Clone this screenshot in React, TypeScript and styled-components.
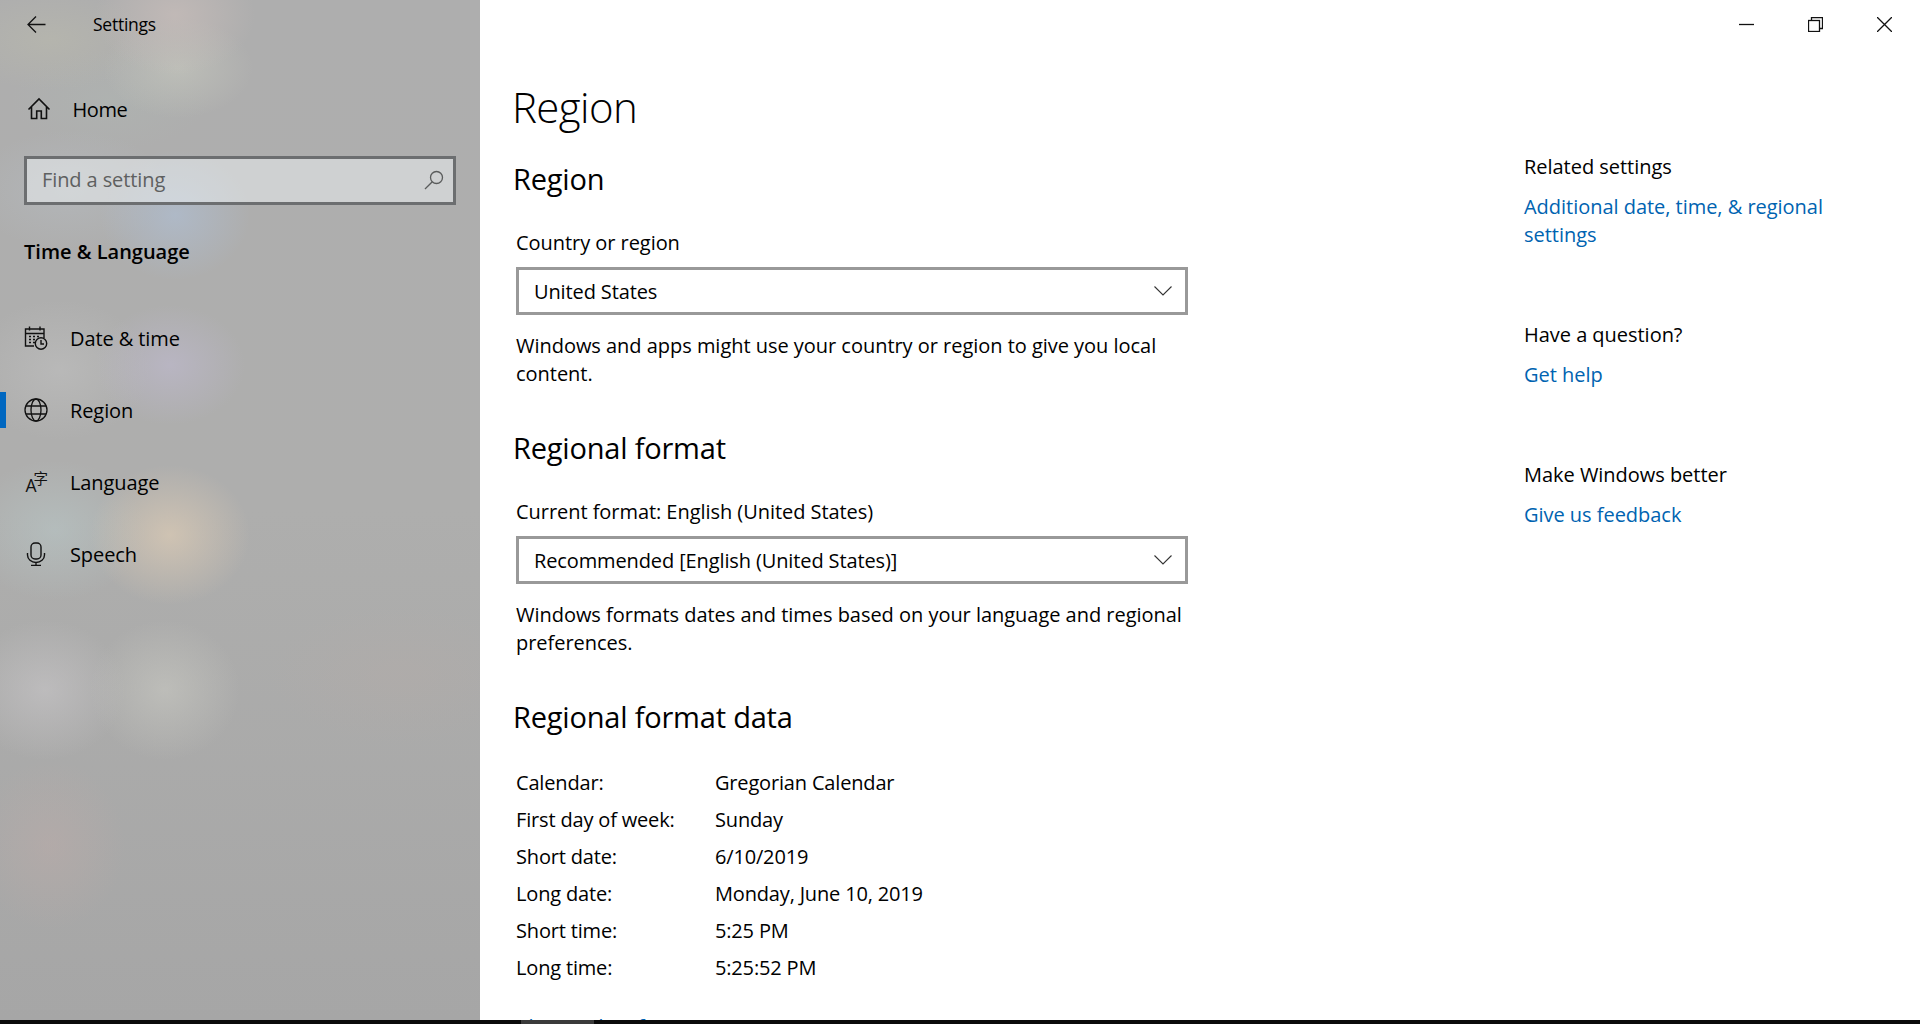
import { Fragment } from "react";
import styled, { createGlobalStyle } from "styled-components";

const GlobalStyle = createGlobalStyle`
  html, body {
    margin: 0;
    padding: 0;
    background: #0a0a0a;
  }
  * {
    box-sizing: border-box;
  }
`;

const sideBlur = `
  radial-gradient(ellipse 80px 60px at 175px 15px, rgba(205, 192, 188, 0.6), transparent),
  radial-gradient(ellipse 75px 50px at 178px 68px, rgba(198, 200, 190, 0.6), transparent),
  radial-gradient(ellipse 100px 50px at 50px 40px, rgba(190, 190, 172, 0.4), transparent),
  radial-gradient(ellipse 100px 50px at 110px 100px, rgba(175, 185, 180, 0.35), transparent),
  radial-gradient(ellipse 75px 65px at 175px 215px, rgba(175, 192, 215, 0.6), transparent),
  radial-gradient(ellipse 100px 60px at 70px 190px, rgba(190, 200, 210, 0.3), transparent),
  radial-gradient(ellipse 75px 60px at 170px 365px, rgba(190, 185, 205, 0.65), transparent),
  radial-gradient(ellipse 90px 70px at 60px 370px, rgba(200, 200, 200, 0.4), transparent),
  radial-gradient(ellipse 80px 70px at 170px 535px, rgba(215, 200, 180, 0.8), transparent),
  radial-gradient(ellipse 90px 70px at 55px 530px, rgba(185, 200, 200, 0.55), transparent),
  radial-gradient(ellipse 75px 70px at 165px 690px, rgba(198, 198, 192, 0.65), transparent),
  radial-gradient(ellipse 80px 70px at 45px 690px, rgba(200, 198, 200, 0.6), transparent),
  radial-gradient(ellipse 130px 70px at 400px 675px, rgba(180, 172, 168, 0.4), transparent),
  radial-gradient(ellipse 75px 85px at 50px 845px, rgba(190, 172, 168, 0.45), transparent)
`;

const Screen = styled.div`
  display: flex;
  flex-direction: column;
  width: 1920px;
  height: 1024px;
  overflow: hidden;
`;

const Page = styled.div`
  display: flex;
  height: 1020px;
  flex: none;
  overflow: hidden;
  font-family: "Open Sans", "Noto Sans", sans-serif;
  color: #000;
`;

const TaskStrip = styled.div`
  height: 4px;
  padding-left: 521px;
  background: #0a0a0a;
`;

const TaskTab = styled.div`
  width: 73px;
  height: 4px;
  background: #3a3a3a;
`;

const Sidebar = styled.aside`
  flex: 0 0 480px;
  display: flex;
  flex-direction: column;
  background: ${sideBlur}, linear-gradient(180deg, #aeaeae 0%, #aeaead 50%, #a6a6a6 100%);
`;

const TitleRow = styled.div`
  display: flex;
  align-items: center;
  height: 48px;
  padding-left: 27px;
`;

const AppTitle = styled.span`
  margin-left: 47px;
  font-size: 17.5px;
  letter-spacing: -0.25px;
`;

const HomeRow = styled.div`
  display: flex;
  align-items: center;
  height: 40px;
  margin-top: 41px;
  padding-left: 27px;
  font-size: 20px;
  letter-spacing: -0.4px;
  gap: 21.5px;
`;

const SearchBox = styled.div`
  display: flex;
  align-items: center;
  justify-content: space-between;
  width: 432px;
  height: 49px;
  margin: 27px 0 0 24px;
  padding: 0 9px 2px 15px;
  border: 3px solid #6c6e70;
  background: rgba(235, 238, 240, 0.55);
  color: #5e6060;
  font-size: 20px;
  letter-spacing: -0.1px;
`;

const GroupTitle = styled.div`
  margin: 29px 0 0 24px;
  font-size: 20px;
  line-height: 36px;
  font-weight: 600;
  letter-spacing: 0;
`;

const NavList = styled.nav`
  display: flex;
  flex-direction: column;
  margin-top: 32px;
`;

const NavItem = styled.div<{ $active?: boolean }>`
  display: flex;
  align-items: center;
  height: 72px;
  padding-left: 24px;
  font-size: 20px;
  letter-spacing: -0.1px;
  gap: 22px;
  position: relative;
  &::before {
    content: "";
    display: ${(p) => (p.$active ? "block" : "none")};
    position: absolute;
    left: 0;
    top: 18px;
    width: 6px;
    height: 36px;
    background: #0067c0;
  }
`;

const Main = styled.main`
  flex: 1;
  display: flex;
  flex-direction: column;
  background: #fff;
  overflow: hidden;
`;

const WindowBar = styled.div`
  display: flex;
  justify-content: flex-end;
  height: 48px;
  padding-right: 28px;
  gap: 54px;
  padding-top: 17px;
  flex: none;
`;

const Columns = styled.div`
  display: flex;
  flex: 1;
`;

const Content = styled.div`
  flex: 0 0 1044px;
  padding-left: 36px;
`;

const PageTitle = styled.h1`
  margin: 23px 0 0 -4px;
  font-size: 42px;
  line-height: 72px;
  font-weight: 300;
  letter-spacing: -0.6px;
`;

const SectionTitle = styled.h2<{ $gap: number }>`
  margin: ${(p) => p.$gap}px 0 0 -3px;
  font-size: 29px;
  line-height: 40px;
  font-weight: 400;
  letter-spacing: -0.2px;
`;

const Label = styled.div`
  margin-top: 30px;
  font-size: 20px;
  line-height: 28px;
  letter-spacing: -0.05px;
`;

const Select = styled.div`
  display: flex;
  align-items: center;
  justify-content: space-between;
  width: 672px;
  height: 48px;
  margin-top: 10px;
  padding: 0 13px 0 15px;
  border: 3px solid #999;
  font-size: 20px;
  letter-spacing: -0.12px;
`;

const Help = styled.p`
  width: 672px;
  margin: 17px 0 0;
  font-size: 20px;
  line-height: 28px;
  letter-spacing: -0.03px;
`;

const DataGrid = styled.dl`
  display: grid;
  grid-template-columns: 199px 1fr;
  grid-auto-rows: 37px;
  align-items: center;
  margin: 27px 0 0;
  font-size: 20px;
  letter-spacing: -0.17px;
  dd {
    margin: 0;
  }
`;

const ClippedLink = styled.a`
  display: block;
  margin-top: 27px;
  font-size: 20px;
  line-height: 28px;
  letter-spacing: -0.05px;
  color: #0063b1;
`;

const Aside = styled.div`
  display: flex;
  flex-direction: column;
  padding-top: 105px;
  width: 310px;
  font-size: 20px;
  line-height: 28px;
  letter-spacing: -0.03px;
`;

const AsideBlock = styled.section`
  margin-bottom: 72px;
`;

const AsideTitle = styled.div`
  margin-bottom: 12px;
`;

const AsideLink = styled.a`
  display: block;
  color: #0063b1;
`;

const Icon = styled.svg<{ $size?: number }>`
  width: ${(p) => p.$size ?? 24}px;
  height: ${(p) => p.$size ?? 24}px;
  flex: none;
  fill: none;
  stroke: #111;
  stroke-width: 1.3;
`;

const SearchGlyph = styled(Icon)`
  stroke: #5a5c5c;
`;

const ChevronGlyph = styled(Icon)`
  height: 10px;
  stroke: #333;
  stroke-width: 1.1;
`;

const LanguageGlyph = styled(Icon)`
  margin: -3px;
  stroke: none;
  fill: #111;
`;

const BackIcon = () => (
  <Icon viewBox="0 0 19 18" $size={19}>
    <path d="M18.5 9H1M9 1 1 9l8 8" />
  </Icon>
);

const HomeIcon = () => (
  <Icon viewBox="0 0 24 24" $size={24}>
    <path d="M1.5 12.5 12 2l10.500 10.500M4.500 10v11.500h5.200v-7.500h4.600v7.500h5.200V10" strokeWidth={1.6} />
  </Icon>
);

const SearchIcon = () => (
  <SearchGlyph viewBox="0 0 20 20" $size={20}>
    <circle cx="12.500" cy="7.500" r="6" />
    <path d="M8.300 11.700 1 19" />
  </SearchGlyph>
);

const CalendarIcon = () => (
  <Icon viewBox="0 0 24 24" $size={24}>
    <path d="M10 20H1.500V3H20v9M1.500 7.500H20M5.500 .5v4M16 .5v4" strokeWidth={1.4} />
    <path d="M5 10.500h2M9 10.500h2M13 10.500h2M5 13.500h2M9 13.500h2M5 16.500h2M9 16.500h2" strokeWidth={1.4} />
    <circle cx="17" cy="17.500" r="5.700" strokeWidth={1.4} />
    <path d="M17 14v4h3" strokeWidth={1.4} />
  </Icon>
);

const GlobeIcon = () => (
  <Icon viewBox="0 0 24 24" $size={24}>
    <circle cx="12" cy="12" r="11" />
    <ellipse cx="12" cy="12" rx="5" ry="11" />
    <path d="M2 8h20M2 16h20" />
  </Icon>
);

const LanguageIcon = () => (
  <LanguageGlyph viewBox="-3 -3 30 30" $size={30}>
    <text x="1.500" y="22" fontSize="17.500" fontFamily="Open Sans, sans-serif">
      A
    </text>
    <text x="9.500" y="13.500" fontSize="14.500" fontFamily="Noto Sans CJK SC, sans-serif">
      字
    </text>
  </LanguageGlyph>
);

const MicIcon = () => (
  <Icon viewBox="0 0 24 24" $size={24}>
    <rect x="7" y="1" width="10" height="16" rx="4" strokeWidth={1.4} />
    <path d="M3.500 11v2a8 7 0 0 0 17 0v-2M12 20v3.500M7 23.500h10" strokeWidth={1.4} />
  </Icon>
);

const Chevron = () => (
  <ChevronGlyph viewBox="0 0 18 10" $size={18}>
    <path d="M.5.500 9 9l8.500-8.500" />
  </ChevronGlyph>
);

const Minimize = () => (
  <Icon viewBox="0 0 15 15" $size={15}>
    <path d="M0 7.500h15" />
  </Icon>
);

const Restore = () => (
  <Icon viewBox="0 0 15 15" $size={15}>
    <rect x=".5" y="3.500" width="11" height="11" />
    <path d="M3.500 3.500v-3h11v11h-3" />
  </Icon>
);

const CloseIcon = () => (
  <Icon viewBox="0 0 15 15" $size={15}>
    <path d="m0 0 15 15M15 0 0 15" />
  </Icon>
);

const formatData = [
  ["Calendar:", "Gregorian Calendar"],
  ["First day of week:", "Sunday"],
  ["Short date:", "6/10/2019"],
  ["Long date:", "Monday, June 10, 2019"],
  ["Short time:", "5:25 PM"],
  ["Long time:", "5:25:52 PM"],
];

export default function App() {
  return (
    <Screen>
      <GlobalStyle />
      <Page>
        <Sidebar>
          <TitleRow>
            <BackIcon />
            <AppTitle>Settings</AppTitle>
          </TitleRow>
          <HomeRow>
            <HomeIcon />
            Home
          </HomeRow>
          <SearchBox>
            Find a setting
            <SearchIcon />
          </SearchBox>
          <GroupTitle>Time &amp; Language</GroupTitle>
          <NavList>
            <NavItem>
              <CalendarIcon />
              Date &amp; time
            </NavItem>
            <NavItem $active>
              <GlobeIcon />
              Region
            </NavItem>
            <NavItem>
              <LanguageIcon />
              Language
            </NavItem>
            <NavItem>
              <MicIcon />
              Speech
            </NavItem>
          </NavList>
        </Sidebar>
        <Main>
          <WindowBar>
            <Minimize />
            <Restore />
            <CloseIcon />
          </WindowBar>
          <Columns>
            <Content>
              <PageTitle>Region</PageTitle>
              <SectionTitle $gap={16}>Region</SectionTitle>
              <Label>Country or region</Label>
              <Select>
                United States
                <Chevron />
              </Select>
              <Help>Windows and apps might use your country or region to give you local content.</Help>
              <SectionTitle $gap={40}>Regional format</SectionTitle>
              <Label>Current format: English (United States)</Label>
              <Select>
                Recommended [English (United States)]
                <Chevron />
              </Select>
              <Help>Windows formats dates and times based on your language and regional preferences.</Help>
              <SectionTitle $gap={40}>Regional format data</SectionTitle>
              <DataGrid>
                {formatData.map(([name, value]) => (
                  <Fragment key={name}>
                    <dt>{name}</dt>
                    <dd>{value}</dd>
                  </Fragment>
                ))}
              </DataGrid>
              <ClippedLink>Change data formats</ClippedLink>
            </Content>
            <Aside>
              <AsideBlock>
                <AsideTitle>Related settings</AsideTitle>
                <AsideLink>Additional date, time, &amp; regional settings</AsideLink>
              </AsideBlock>
              <AsideBlock>
                <AsideTitle>Have a question?</AsideTitle>
                <AsideLink>Get help</AsideLink>
              </AsideBlock>
              <AsideBlock>
                <AsideTitle>Make Windows better</AsideTitle>
                <AsideLink>Give us feedback</AsideLink>
              </AsideBlock>
            </Aside>
          </Columns>
        </Main>
      </Page>
      <TaskStrip>
        <TaskTab />
      </TaskStrip>
    </Screen>
  );
}
